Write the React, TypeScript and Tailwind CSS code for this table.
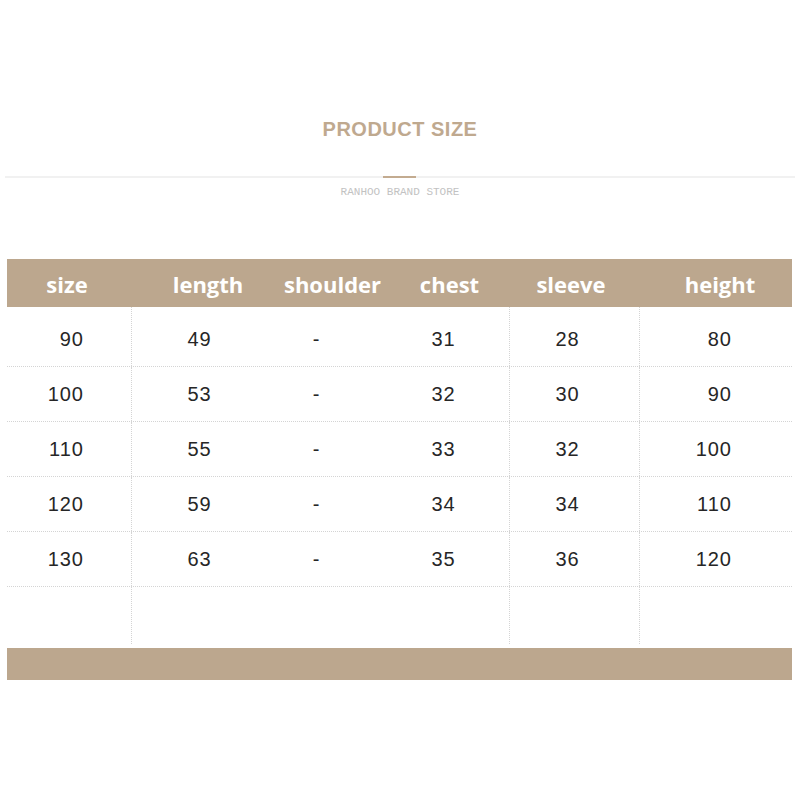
import React from 'react';

const headers = [
  { label: 'size', cls: 'pr-[4px]' },
  { label: 'length', cls: 'pl-[20px]' },
  { label: 'shoulder', cls: 'pl-[20px]' },
  { label: 'chest', cls: 'pl-[10px]' },
  { label: 'sleeve', cls: 'pr-[6px]' },
  { label: 'height', cls: 'pl-[9px]' },
];

const rows = [
  ['90', '49', '-', '31', '28', '80'],
  ['100', '53', '-', '32', '30', '90'],
  ['110', '55', '-', '33', '32', '100'],
  ['120', '59', '-', '34', '34', '110'],
  ['130', '63', '-', '35', '36', '120'],
];

// per-column alignment of the body cells
const cellCls = [
  'justify-end pr-[47px]',
  'justify-center pl-[2px]',
  'justify-center pr-[12px]',
  'justify-center pr-[2px]',
  'justify-center pr-[14px]',
  'justify-end pr-[60px]',
];

// only some columns carry a dotted rule on their left side
const ruleLeft = [false, true, false, false, true, true];

const cols = 'grid grid-cols-[124px_134px_115px_129px_130px_153px]';

const App: React.FC = () => {
  return (
    <div className="w-[800px] h-[800px] bg-white pt-[116px]">
      {/* Title */}
      <h1 className="text-center text-[20px] font-bold tracking-[0.5px] text-[#bfa98f] leading-[26px] font-['Liberation_Sans',sans-serif]">
        PRODUCT SIZE
      </h1>

      <div className="mt-[34px] mx-[5px] h-[2px] bg-[#f1f1f1] flex justify-center">
        <div className="w-[33px] h-[2px] bg-[#c3ab90] -ml-[2px]" />
      </div>

      <p className="mt-[8px] text-center text-[11px] leading-[12px] text-[#c2c2c2] font-['Liberation_Mono',monospace]">
        RANHOO BRAND STORE
      </p>

      {/* Table */}
      <div className="mt-[61px] mx-[7px] w-[785px]">
        <div className={`${cols} h-[48px] bg-[#bca78e]`}>
          {headers.map(h => (
            <div
              key={h.label}
              className={`flex items-center justify-center pt-[3px] text-white text-[22px] font-bold font-['Open_Sans',sans-serif] ${h.cls}`}
            >
              {h.label}
            </div>
          ))}
        </div>

        <div className="pt-[5px]">
          {[...rows, null].map((row, ri) => (
            <div
              key={ri}
              className={`${cols} ${ri === rows.length ? 'h-[57px]' : 'h-[55px]'} ${ri < rows.length ? 'border-b border-dotted border-[#d4d4d4]' : ''}`}
            >
              {(row ?? ['', '', '', '', '', '']).map((v, ci) => (
                <div
                  key={ci}
                  className={`flex items-center text-[20px] tracking-[1px] text-[#262626] font-['Liberation_Sans',sans-serif] ${cellCls[ci]} ${ruleLeft[ci] ? 'border-l border-dotted border-[#d4d4d4]' : ''} ${ri === 0 && ruleLeft[ci] ? '-mt-[5px] pt-[5px]' : ''}`}
                >
                  {v}
                </div>
              ))}
            </div>
          ))}
        </div>

        <div className="mt-[4px] h-[32px] bg-[#bca78e]" />
      </div>
    </div>
  );
};

export default App;
